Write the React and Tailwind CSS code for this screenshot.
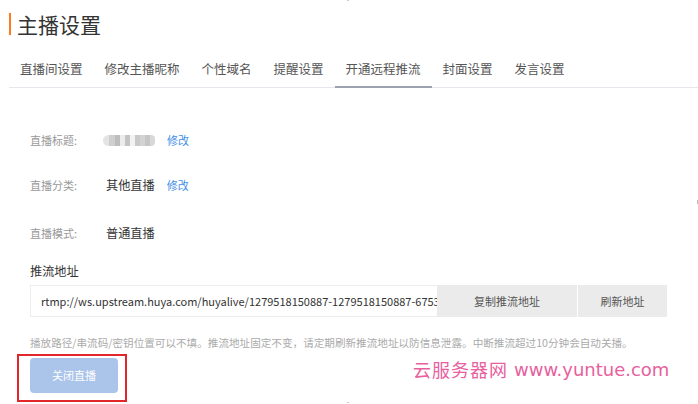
import React from "react";

const tabs = ["直播间设置", "修改主播昵称", "个性域名", "提醒设置", "开通远程推流", "封面设置", "发言设置"];

export default function App() {
  return (
    <div className="relative w-[698px] h-[404px] overflow-hidden bg-white font-['Noto_Sans_CJK_SC',sans-serif] text-[#333]">
      {/* title */}
      <div className="pt-[13px] pl-[9px] flex items-center">
        <div className="w-[2px] h-[22px] bg-[#ff7a1a]" />
        <span className="ml-[6px] text-[21px] leading-[22px] text-[#333]">主播设置</span>
      </div>

      {/* tabs */}
      <div className="ml-[9px] mt-[15px] flex border-b border-[#e6e6ec]">
        {tabs.map((t) => (
          <div
            key={t}
            className={
              "h-[38px] pt-[2px] px-[11px] -mb-px flex items-center text-[12.5px] leading-none text-[#555] border-b-2 " +
              (t === "开通远程推流" ? "border-[#9da2b0] text-[#333]" : "border-transparent")
            }
          >
            {t}
          </div>
        ))}
      </div>

      {/* form */}
      <div className="pl-[30px]">
        <div className="mt-[42px] h-[20px] flex items-center">
          <span className="w-[73px] text-[11px] text-[#999]">直播标题:</span>
          <div className="relative w-[52px] h-[12px] flex items-center blur-[0.6px]">
            <div className="w-[6px] h-[11px] rounded-l-full bg-[#e4e4e4]" />
            <div className="w-[6px] h-[11px] bg-[#cfcfcf]" />
            <div className="w-[5px] h-[11px] bg-[#bdbdbd]" />
            <div className="w-[5px] h-[11px] bg-[#ececec]" />
            <div className="w-[5px] h-[11px] bg-[#c4c4c4]" />
            <div className="w-[5px] h-[11px] bg-[#f2f2f2]" />
            <div className="w-[5px] h-[11px] bg-[#c9c9c9]" />
            <div className="w-[5px] h-[11px] bg-[#d3d3d3]" />
            <div className="w-[5px] h-[11px] bg-[#c6c6c6]" />
            <div className="w-[5px] h-[11px] rounded-r-sm bg-[#d8d8d8]" />
          </div>
          <span className="ml-[12px] text-[11px] text-[#3f8ee8]">修改</span>
        </div>

        <div className="mt-[25px] h-[20px] flex items-center">
          <span className="w-[76px] text-[11px] text-[#999]">直播分类:</span>
          <span className="text-[12.2px] text-[#333]">其他直播</span>
          <span className="ml-[12px] text-[11px] text-[#3f8ee8]">修改</span>
        </div>

        <div className="mt-[28px] h-[20px] flex items-center">
          <span className="w-[76px] text-[11px] text-[#999]">直播模式:</span>
          <span className="text-[12.2px] text-[#333]">普通直播</span>
        </div>

        <div className="mt-[18px] h-[20px] flex items-center text-[12.2px] text-[#333]">推流地址</div>

        <div className="mt-[4px] flex h-[32px] w-[637px]">
          <div className="w-[407px] h-full border border-[#ededed] border-r-0 flex items-center pl-[10px] overflow-hidden">
            <span className="whitespace-nowrap text-[11px] text-[#333]">
              rtmp://ws.upstream.huya.com/huyalive/1279518150887-1279518150887-6753
            </span>
          </div>
          <div className="w-[140px] h-full bg-[#ebebeb] flex items-center justify-center text-[11px] text-[#555]">复制推流地址</div>
          <div className="w-px h-full bg-white" />
          <div className="w-[89px] h-full bg-[#ebebeb] flex items-center justify-center text-[11px] text-[#555]">刷新地址</div>
        </div>

        <div className="mt-[16px] h-[20px] flex items-center text-[10.6px] text-[#aaa] whitespace-nowrap">
          播放路径/串流码/密钥位置可以不填。推流地址固定不变，请定期刷新推流地址以防信息泄露。中断推流超过10分钟会自动关播。
        </div>

        <div className="mt-[5px] w-[88px] h-[35px] rounded-[4px] bg-[#aac4ea] flex items-center justify-center text-[11px] text-white">
          关闭直播
        </div>
      </div>

      {/* annotation box */}
      <div className="absolute left-[17px] top-[354px] w-[110px] h-[48px] border-2 border-[#e3262c]" />

      {/* watermark */}
      <div className="absolute left-[413px] top-[356px] flex items-center text-[#e8609e]">
        <span className="text-[18px] tracking-[1px] font-['Noto_Sans_CJK_SC',serif]">云服务器网</span>
        <span className="ml-[6px] text-[18px] font-['DejaVu_Sans',sans-serif]">www.yuntue.com</span>
      </div>

      {/* tiny edge marks */}
      <div className="absolute left-[697px] top-[200px] w-px h-[4px] bg-[#bbb]" />
      <div className="absolute left-[347px] top-0 w-[2px] h-px bg-[#ccc]" />
      <div className="absolute left-[347px] top-[402px] w-[2px] h-px bg-[#ccc]" />
    </div>
  );
}
